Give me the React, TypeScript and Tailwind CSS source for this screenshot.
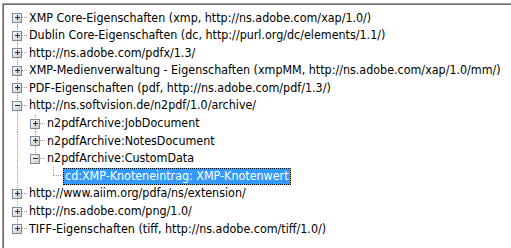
type Node = {
  label: string;
  children?: Node[];
  open?: boolean;
  selected?: boolean;
};

const collapsed = [{ label: "" }];

const tree: Node[] = [
  { label: "XMP Core-Eigenschaften (xmp, http://ns.adobe.com/xap/1.0/)", children: collapsed },
  { label: "Dublin Core-Eigenschaften (dc, http://purl.org/dc/elements/1.1/)", children: collapsed },
  { label: "http://ns.adobe.com/pdfx/1.3/", children: collapsed },
  { label: "XMP-Medienverwaltung - Eigenschaften (xmpMM, http://ns.adobe.com/xap/1.0/mm/)", children: collapsed },
  { label: "PDF-Eigenschaften (pdf, http://ns.adobe.com/pdf/1.3/)", children: collapsed },
  {
    label: "http://ns.softvision.de/n2pdf/1.0/archive/",
    open: true,
    children: [
      { label: "n2pdfArchive:JobDocument", children: collapsed },
      { label: "n2pdfArchive:NotesDocument", children: collapsed },
      {
        label: "n2pdfArchive:CustomData",
        open: true,
        children: [{ label: "cd:XMP-Knoteneintrag: XMP-Knotenwert", selected: true }],
      },
    ],
  },
  { label: "http://www.aiim.org/pdfa/ns/extension/", children: collapsed },
  { label: "http://ns.adobe.com/png/1.0/", children: collapsed },
  { label: "TIFF-Eigenschaften (tiff, http://ns.adobe.com/tiff/1.0/)", children: collapsed },
];

type Row = { node: Node; guides: boolean[]; last: boolean; first: boolean };

function flatten(nodes: Node[], depth: number, guides: boolean[], out: Row[]) {
  nodes.forEach((n, i) => {
    const last = i === nodes.length - 1;
    out.push({ node: n, guides, last, first: depth === 0 && i === 0 });
    if (n.open && n.children) flatten(n.children, depth + 1, [...guides, !last], out);
  });
  return out;
}

const dot = { stroke: "#a0a0a0", strokeWidth: 1, strokeDasharray: "1 1", shapeRendering: "crispEdges" as const };

// one indent column of the tree: guide line, elbow, and the +/- box
function Elbow({ kind, first, last, box }: { kind: "guide" | "node"; first?: boolean; last?: boolean; box?: "open" | "closed" }) {
  return (
    <svg width="18" height="100%" className="shrink-0 overflow-visible">
      {kind === "guide" && <line x1="9.5" y1="0" x2="9.5" y2="100%" {...dot} />}
      {kind === "node" && (
        <>
          <line x1="9.5" y1={first ? "50%" : "0"} x2="9.5" y2={last ? "50%" : "100%"} {...dot} />
          <line x1="10" y1="50%" x2="19" y2="50%" {...dot} />
          {box && (
            <svg x="5" y="50%" overflow="visible">
              <defs>
                <linearGradient id="bx" x1="0" y1="0" x2="1" y2="1">
                  <stop offset="0" stopColor="#ffffff" />
                  <stop offset="1" stopColor="#c8c8bf" />
                </linearGradient>
              </defs>
              <rect x="-0.5" y="-4.5" width="9" height="9" fill="url(#bx)" stroke="#7b8ba6" shapeRendering="crispEdges" />
              <rect x="1.5" y="-0.5" width="5" height="1" fill="#1b2a66" shapeRendering="crispEdges" />
              {box === "closed" && <rect x="3.5" y="-2.5" width="1" height="5" fill="#1b2a66" shapeRendering="crispEdges" />}
            </svg>
          )}
        </>
      )}
    </svg>
  );
}

function TreeRow({ row }: { row: Row }) {
  const { node, guides, last, first } = row;
  return (
    <div className="flex h-[17.6px] items-stretch">
      {guides.map((g, i) => (g ? <Elbow key={i} kind="guide" /> : <div key={i} className="w-[18px] shrink-0" />))}
      <Elbow kind="node" first={first} last={last} box={node.children ? (node.open ? "open" : "closed") : undefined} />
      <div className="flex items-center ml-[1px]">
        {node.selected ? (
          <div className="bg-[#d69a3a] h-[17px] flex">
            <span className="flex items-center px-[1px] bg-[#3399ff] bg-clip-padding border border-dotted border-black text-white">
              {node.label}
            </span>
          </div>
        ) : (
          <span className="px-[2px] text-black">{node.label}</span>
        )}
      </div>
    </div>
  );
}

export default function App() {
  const rows = flatten(tree, 0, [], []);
  return (
    <div className="w-[511px] h-[248px] bg-white overflow-hidden pl-[2px] pt-[3px] font-['DejaVu_Sans_Condensed','DejaVu_Sans',sans-serif]">
      <div className="h-full border-l border-t border-[#a0a0a0]">
        <div className="h-full border-l border-t border-[#696969] bg-white pl-[4px] pt-[4px] text-[12.4px] whitespace-nowrap">
          {rows.map((r, i) => (
            <TreeRow key={i} row={r} />
          ))}
        </div>
      </div>
    </div>
  );
}
